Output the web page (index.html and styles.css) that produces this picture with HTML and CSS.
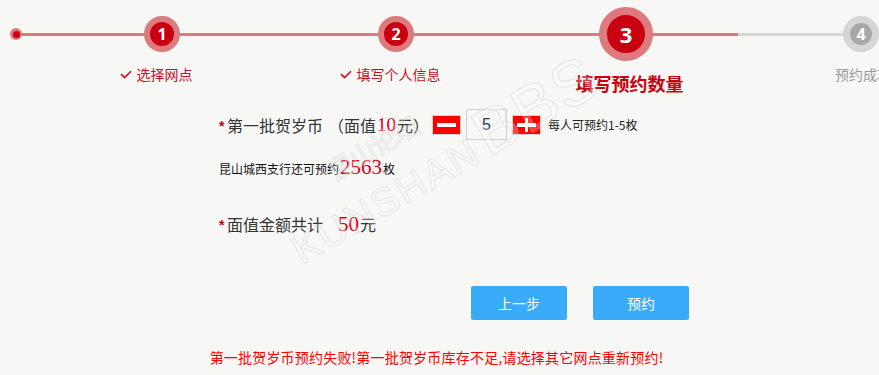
FILE: index.html
```html
<!DOCTYPE html>
<html lang="zh-CN">
<head>
<meta charset="utf-8">
<title>填写预约数量</title>
<link rel="stylesheet" href="styles.css">
</head>
<body>
<div class="page">
  <div class="stepper">
    <div class="track track-done"></div>
    <div class="track track-todo"></div>
    <div class="start-dot"><span></span></div>
    <div class="step-grid">
      <div class="step">
        <div class="circle-box"><div class="circle small">1</div></div>
        <div class="label done"><svg class="check" width="12" height="9" viewBox="0 0 12 9"><polyline points="1,4.2 4.6,7.6 11,1.2" fill="none" stroke="#c8101e" stroke-width="1.6"/></svg>选择网点</div>
      </div>
      <div class="step">
        <div class="circle-box"><div class="circle small">2</div></div>
        <div class="label done"><svg class="check" width="12" height="9" viewBox="0 0 12 9"><polyline points="1,4.2 4.6,7.6 11,1.2" fill="none" stroke="#c8101e" stroke-width="1.6"/></svg>填写个人信息</div>
      </div>
      <div class="step">
        <div class="circle-box"><div class="circle big">3</div></div>
        <div class="label current">填写预约数量</div>
      </div>
      <div class="step">
        <div class="circle-box"><div class="circle small todo">4</div></div>
        <div class="label todo-label">预约成功</div>
      </div>
    </div>
  </div>

  <div class="form">
    <div class="row row-qty">
      <span class="req">*</span><span class="field">第一批贺岁币</span>
      <span class="face">（面值<em class="num">10</em>元）</span>
      <button class="pm minus" type="button" aria-label="减少"><span class="bar-h"></span></button>
      <input class="qty" type="text" value="5">
      <button class="pm plus" type="button" aria-label="增加"><span class="bar-h"></span><span class="bar-v"></span></button>
      <span class="hint">每人可预约1-5枚</span>
    </div>
    <div class="row row-left">
      <span class="small-text">昆山城西支行还可预约</span><em class="num big-num">2563</em><span class="small-text">枚</span>
    </div>
    <div class="row row-total">
      <span class="req">*</span><span class="field">面值金额共计</span>
      <em class="num big-num total-num">50</em><span class="field">元</span>
    </div>
    <div class="actions">
      <button class="btn" type="button">上一步</button>
      <button class="btn" type="button">预约</button>
    </div>
  </div>

  <p class="error">第一批贺岁币预约失败!第一批贺岁币库存不足,请选择其它网点重新预约!</p>

  <div class="watermark">
    <div class="wm-cn">昆山论坛</div>
    <div class="wm-en">KUNSHAN<span class="wm-bbs">BBS</span></div>
  </div>
</div>
</body>
</html>
```

FILE: styles.css
```css
html, body {
  margin: 0;
  padding: 0;
  background: #f7f7f5;
}
body {
  width: 879px;
  height: 375px;
  overflow: hidden;
  font-family: "Noto Sans CJK SC", "Liberation Sans", sans-serif;
}
.page {
  position: relative;
  width: 879px;
  height: 375px;
  overflow: hidden;
}

/* ---------- stepper ---------- */
.stepper {
  position: relative;
  height: 100px;
}
.track {
  position: absolute;
  top: 33px;
  height: 3px;
}
.track-done {
  left: 16px;
  width: 722px;
  background: #dc7a7e;
}
.track-todo {
  left: 738px;
  right: 0;
  background: #d6d6d6;
}
.start-dot {
  position: absolute;
  left: 10px;
  top: 28px;
  width: 12px;
  height: 12px;
  border-radius: 50%;
  background: #dc7a7e;
  display: flex;
  align-items: center;
  justify-content: center;
}
.start-dot span {
  width: 7px;
  height: 7px;
  border-radius: 50%;
  background: #c8000f;
}
.step-grid {
  position: relative;
  display: grid;
  grid-template-columns: 234px 234px 226px 244px;
  padding-left: 45px;
}
.step {
  display: flex;
  flex-direction: column;
  align-items: center;
}
.circle-box {
  height: 54px;
  margin-top: 7px;
  display: flex;
  align-items: center;
  justify-content: center;
}
.circle {
  border-radius: 50%;
  display: flex;
  align-items: center;
  justify-content: center;
  color: #fff;
  font-family: "Open Sans", "Liberation Sans", sans-serif;
  font-weight: 700;
}
.circle.small {
  width: 24px;
  height: 24px;
  border: 6px solid #dc7a7e;
  background: #c8000f;
  font-size: 16px;
}
.circle.big {
  width: 38px;
  height: 38px;
  border: 8px solid #dc7a7e;
  background: #c8000f;
  font-size: 22px;
}
.circle.small.todo {
  width: 22px;
  height: 22px;
  border: 7px solid #d6d6d6;
  background: #a8a8a8;
}
.label {
  display: flex;
  align-items: center;
  font-size: 14px;
  line-height: 16px;
  margin-top: 5px;
  white-space: nowrap;
}
.label.done {
  color: #c8101e;
  margin-right: 12px;
}
.check {
  margin-right: 5px;
}
.label.current {
  color: #c8000f;
  font-size: 18px;
  font-weight: 700;
  line-height: 22px;
  margin-top: 11px;
  margin-left: 7px;
}
.label.todo-label {
  color: #9a9a9a;
  margin-left: 4px;
}

/* ---------- form ---------- */
.form {
  padding-left: 219px;
}
.row {
  display: flex;
  align-items: center;
  white-space: nowrap;
}
.row-qty {
  margin-top: 9px;
  height: 31px;
}
.req {
  color: #c8000f;
  font-size: 14px;
  width: 8px;
  font-family: "Liberation Sans", sans-serif;
  font-weight: 700;
  line-height: 14px;
  padding-top: 2px;
}
.field {
  font-size: 16px;
  color: #333;
}
.face {
  font-size: 16px;
  color: #333;
  margin-left: 5px;
  display: flex;
  align-items: center;
}
.num {
  font-style: normal;
  color: #dc0018;
  font-family: "Liberation Serif", serif;
}
.face .num {
  font-size: 19px;
  margin: 0 1px;
}
.pm {
  width: 29px;
  height: 20px;
  padding: 0;
  border: 1px solid #d4d4d4;
  background: #ff0000;
  position: relative;
  display: flex;
  align-items: center;
  justify-content: center;
  cursor: pointer;
}
.minus {
  margin-left: 3px;
}
.plus {
  margin-left: 5px;
}
.bar-h {
  width: 19px;
  height: 4px;
  background: #fff;
}
.bar-v {
  position: absolute;
  left: 12px;
  top: 2px;
  width: 3px;
  height: 14px;
  background: #fff;
}
.qty {
  box-sizing: border-box;
  width: 41px;
  height: 31px;
  margin-left: 5px;
  border: 1px solid #cfcfcf;
  background: #f7f7f5;
  text-align: center;
  font-size: 16px;
  color: #2b3566;
  font-family: "Liberation Sans", sans-serif;
  padding: 0;
}
.hint {
  margin-left: 7px;
  font-size: 12px;
  color: #222;
}
.row-left {
  margin-top: 15px;
  height: 24px;
}
.small-text {
  font-size: 12px;
  color: #111;
  padding-top: 3px;
}
.big-num {
  font-size: 21px;
  margin: 0 1px;
}
.row-total {
  margin-top: 33px;
  height: 24px;
}
.total-num {
  margin-left: 15px;
}
.actions {
  display: flex;
  gap: 26px;
  margin-top: 50px;
  padding-left: 252px;
}
.btn {
  width: 96px;
  height: 34px;
  border: none;
  border-radius: 2px;
  background: #3aabf9;
  color: #fff;
  font-size: 14px;
  font-family: "Noto Sans CJK SC", sans-serif;
  padding: 0;
  cursor: pointer;
}
.error {
  margin: 27px 0 0;
  text-align: center;
  font-size: 14px;
  line-height: 20px;
  color: #ff0000;
  letter-spacing: 0.2px;
  padding-right: 6px;
}

/* ---------- watermark overlay ---------- */
.watermark {
  position: absolute;
  left: 262px;
  top: 196px;
  transform: rotate(-30deg);
  transform-origin: left top;
  pointer-events: none;
  color: rgba(255, 255, 255, 0.25);
  -webkit-text-stroke: 1px rgba(185, 185, 185, 0.32);
  font-family: "Liberation Sans", sans-serif;
  line-height: 1;
}
.wm-cn {
  font-family: "Noto Sans CJK SC", sans-serif;
  font-size: 26px;
  margin-left: 70px;
  letter-spacing: -1px;
}
.wm-en {
  font-size: 40px;
  letter-spacing: 2px;
  white-space: nowrap;
}
.wm-bbs {
  font-size: 64px;
  margin-left: 6px;
}
```
